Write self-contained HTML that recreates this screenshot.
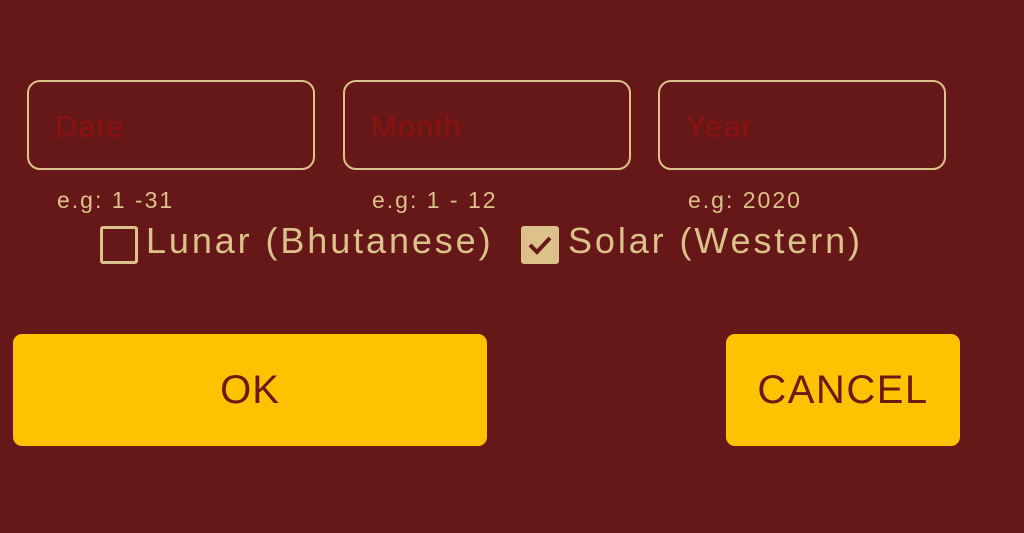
<!DOCTYPE html>
<html><head><meta charset="utf-8"><style>
html,body{margin:0;width:1024px;height:533px;overflow:hidden;background:#661819;font-family:"Liberation Sans",sans-serif;}
.box{position:absolute;top:80px;width:284px;height:86px;border:2px solid #dcc18a;border-radius:13px;box-sizing:content-box;}
.ph{position:absolute;left:26px;top:27px;font-size:31px;letter-spacing:1px;color:#8c1212;}
.hint{position:absolute;top:187px;font-size:23px;letter-spacing:2px;color:#dcc18a;}
.cb{position:absolute;top:226px;width:32px;height:32px;border:3px solid #dcc18a;border-radius:3px;}
.lbl{position:absolute;top:220px;font-size:36px;letter-spacing:2.9px;color:#dcc18a;}
.btn{position:absolute;top:334px;height:112px;background:#ffc200;border-radius:9px;color:#6b1a10;font-size:40px;display:flex;align-items:center;justify-content:center;}
</style></head><body>
<div class="box" style="left:27px"><span class="ph">Date</span></div>
<div class="box" style="left:343px"><span class="ph">Month</span></div>
<div class="box" style="left:658px"><span class="ph">Year</span></div>
<div class="hint" style="left:57px">e.g: 1 -31</div>
<div class="hint" style="left:372px">e.g: 1 - 12</div>
<div class="hint" style="left:688px">e.g: 2020</div>
<div class="cb" style="left:100px"></div>
<div class="lbl" style="left:146px">Lunar (Bhutanese)</div>
<div class="cb" style="left:521px;background:#dcc18a"><svg width="32" height="32" viewBox="0 0 32 32"><path d="M6 16 L13 23 L26 9" stroke="#661819" stroke-width="4" fill="none"/></svg></div>
<div class="lbl" style="left:568px">Solar (Western)</div>
<div class="btn" style="left:13px;width:474px;letter-spacing:1px">OK</div>
<div class="btn" style="left:726px;width:234px;letter-spacing:1.5px">CANCEL</div>
</body></html>
